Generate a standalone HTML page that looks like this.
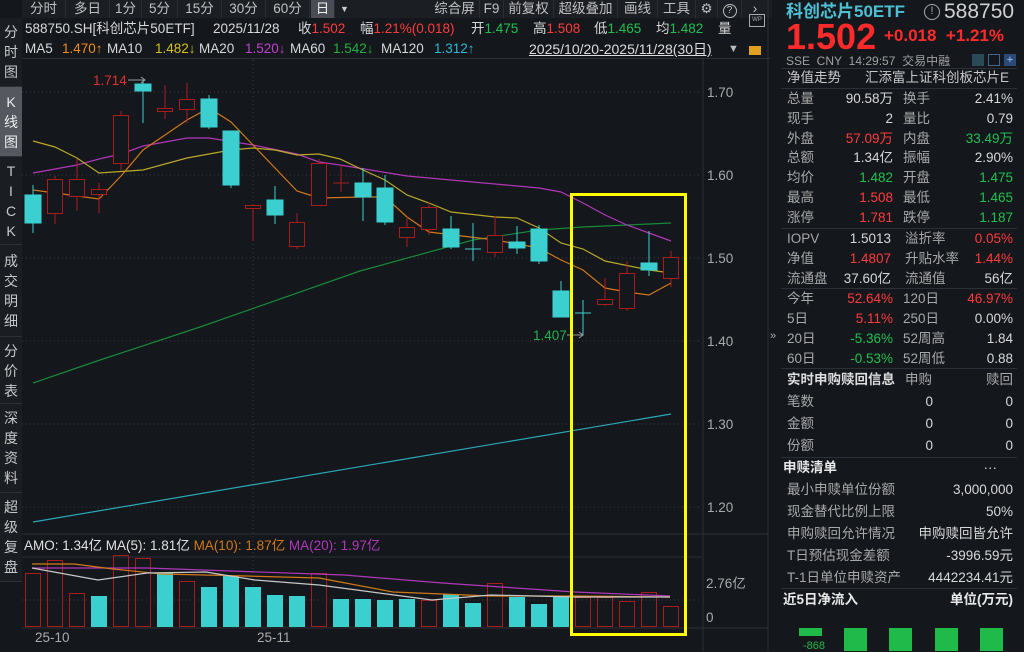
<!DOCTYPE html>
<html><head><meta charset="utf-8"><style>
*{margin:0;padding:0;box-sizing:border-box}
body{width:1024px;height:651px;background:#14171c;overflow:hidden;position:relative;font-family:"Liberation Sans","Noto Sans CJK SC",sans-serif;font-size:13px;color:#c8c8c8}
.a{position:absolute;white-space:nowrap}
.tb{position:absolute;top:0;height:18px;line-height:18px;font-size:13.5px;color:#c0c0c0;text-align:center;border-right:1px solid #2a2d33}
.sb{position:absolute;left:0;width:22px;text-align:center;font-size:14px;line-height:20px;color:#c8c8c8;border-bottom:1px solid #2c2f35;background:#1a1d22}
.r{color:#ff3b3b}.g{color:#1fc050}.w{color:#d8d8d8}.gy{color:#a8a8a8}
.i{position:absolute;white-space:nowrap;font-size:13.5px;line-height:18px}
.row{position:absolute;left:787px;width:226px;height:20px;font-size:13.5px;line-height:20px}
.row span{position:absolute}
.l1{left:0;color:#a8a8a8}.v1{right:120px;text-align:right}.l2{left:116px;color:#a8a8a8}.v2{right:0;text-align:right}
.sep{position:absolute;left:781px;width:236px;height:1px;background:#2c2f35}
</style></head><body>
<div class="a" style="left:22px;top:0;width:750px;height:18px;background:#1b1e23"></div>
<div class="tb" style="left:22px;width:44px">分时</div>
<div class="tb" style="left:66px;width:44px">多日</div>
<div class="tb" style="left:110px;width:32px">1分</div>
<div class="tb" style="left:142px;width:36px">5分</div>
<div class="tb" style="left:178px;width:44px">15分</div>
<div class="tb" style="left:222px;width:44px">30分</div>
<div class="tb" style="left:266px;width:44px">60分</div>
<div class="tb" style="left:311px;width:24px;background:#4a4d55;color:#eee">日</div>
<div class="a" style="left:340px;top:0;font-size:9px;line-height:18px;color:#ccc">▼</div>
<div class="tb" style="left:430px;width:50px">综合屏</div>
<div class="tb" style="left:480px;width:24px">F9</div>
<div class="tb" style="left:504px;width:50px">前复权</div>
<div class="tb" style="left:554px;width:64px">超级叠加</div>
<div class="tb" style="left:618px;width:40px">画线</div>
<div class="tb" style="left:658px;width:38px">工具</div>
<div class="tb" style="left:696px;width:22px">⚙</div>
<div class="tb" style="left:718px;width:24px"><span style="display:inline-block;width:14px;height:14px;border:1.3px solid #bbb;border-radius:50%;line-height:11px;font-size:10px;margin-top:2px">?</span></div>
<div class="tb" style="left:742px;width:26px;border:none">›</div>
<div class="sb" style="top:18px;height:69px;padding-top:4px">分<br>时<br>图</div>
<div class="sb" style="top:87px;height:70px;padding-top:5px;background:#55585f;color:#eee">K<br>线<br>图</div>
<div class="sb" style="top:157px;height:88px;padding-top:4px">T<br>I<br>C<br>K</div>
<div class="sb" style="top:245px;height:92px;padding-top:6px">成<br>交<br>明<br>细</div>
<div class="sb" style="top:337px;height:67px;padding-top:4px">分<br>价<br>表</div>
<div class="sb" style="top:404px;height:89px;padding-top:4px">深<br>度<br>资<br>料</div>
<div class="sb" style="top:493px;height:89px;padding-top:4px">超<br>级<br>复<br>盘</div>
<div class="i w" style="left:25px;top:20px">588750.SH[科创芯片50ETF]</div>
<div class="i w" style="left:213px;top:20px">2025/11/28</div>
<div class="i" style="left:298px;top:20px"><span class="w">收</span><span class="r">1.502</span></div>
<div class="i" style="left:360px;top:20px"><span class="w">幅</span><span class="r">1.21%(0.018)</span></div>
<div class="i" style="left:471px;top:20px"><span class="w">开</span><span class="g">1.475</span></div>
<div class="i" style="left:533px;top:20px"><span class="w">高</span><span class="r">1.508</span></div>
<div class="i" style="left:594px;top:20px"><span class="w">低</span><span class="g">1.465</span></div>
<div class="i" style="left:656px;top:20px"><span class="w">均</span><span class="g">1.482</span></div>
<div class="i w" style="left:718px;top:20px">量</div>
<div class="i w" style="left:25px;top:40px">MA5</div><div class="i" style="left:62px;top:40px;color:#f08c1e">1.470↑</div>
<div class="i w" style="left:107px;top:40px">MA10</div><div class="i" style="left:155px;top:40px;color:#d4c020">1.482↓</div>
<div class="i w" style="left:199px;top:40px">MA20</div><div class="i" style="left:245px;top:40px;color:#c040d0">1.520↓</div>
<div class="i w" style="left:290px;top:40px">MA60</div><div class="i" style="left:333px;top:40px;color:#20b040">1.542↓</div>
<div class="i w" style="left:381px;top:40px">MA120</div><div class="i" style="left:434px;top:40px;color:#30b8d8">1.312↑</div>
<div class="i" style="left:529px;top:40px;font-size:14px;text-decoration:underline;color:#ddd">2025/10/20-2025/11/28(30日)</div>
<div class="a" style="left:728px;top:43px;font-size:11px;color:#bbb">▼</div>
<div class="a" style="left:749px;top:46px;width:12px;height:9px;background:#e0a020"></div>
<div class="a" style="left:749px;top:14px;width:16px;height:13px;border:1px solid #aaa;font-size:6px;color:#aaa;line-height:11px;text-align:center">WP</div>
<div class="a" style="left:22px;top:58px;width:748px;height:1px;background:#2c2f35"></div>
<svg class="a" style="left:0;top:0" width="775" height="651">
<g stroke="#3a3d44" stroke-dasharray="1,3" stroke-width="1">
<line x1="22" y1="92" x2="702" y2="92"/><line x1="22" y1="175" x2="702" y2="175"/><line x1="22" y1="258" x2="702" y2="258"/><line x1="22" y1="341" x2="702" y2="341"/><line x1="22" y1="424" x2="702" y2="424"/><line x1="22" y1="507" x2="702" y2="507"/>
<line x1="253" y1="60" x2="253" y2="627"/><line x1="22" y1="600" x2="702" y2="600"/>
</g>
<line x1="703" y1="59" x2="703" y2="651" stroke="#2c2f35"/>
<line x1="768" y1="0" x2="768" y2="651" stroke="#2c2f35"/>
<line x1="22" y1="534" x2="768" y2="534" stroke="#2c2f35"/>
<line x1="22" y1="557" x2="702" y2="557" stroke="#2c2f35"/>
<line x1="22" y1="628" x2="768" y2="628" stroke="#2c2f35"/>
<g fill="#aaa" font-size="13.5" font-family="Liberation Sans">
<text x="707" y="97">1.70</text><text x="707" y="180">1.60</text><text x="707" y="263">1.50</text><text x="707" y="346">1.40</text><text x="707" y="429">1.30</text><text x="707" y="512">1.20</text>
<text x="706" y="588">2.76亿</text><text x="706" y="622">0</text>
<text x="35" y="642">25-10</text><text x="257" y="642">25-11</text>
</g>
<polyline fill="none" stroke="#178a3a" stroke-width="1.2" points="33,383 100,360 200,327 360,271 473,240 539,230 583,227 671,223"/>
<polyline fill="none" stroke="#2aa8b8" stroke-width="1.2" points="33,522 671,414"/>
<polyline fill="none" stroke="#b038b8" stroke-width="1.2" points="33,173 77,165 99,159 121,154 143,146 187,138 209,138 253,145 297,154 319,162 340,165 407,176 473,182 517,186 539,188 561,192 583,203 605,215 627,225 649,233 671,241"/>
<polyline fill="none" stroke="#b8a828" stroke-width="1.2" points="33,141 55,147 77,158 99,173 143,170 187,158 231,150 253,148 275,150 297,155 319,154 340,159 363,170 385,180 407,195 429,203 451,212 495,217 517,218 539,228 561,243 583,249 605,261 649,270 671,273"/>
<polyline fill="none" stroke="#d07818" stroke-width="1.2" points="33,190 99,199 121,176 143,150 187,120 209,108 231,122 253,145 297,191 319,198 363,197 385,197 407,217 429,232 495,240 539,248 561,260 583,270 605,288 627,292 649,295 671,283"/>
<g stroke-width="1">
<g stroke="#3ccfcf" fill="#3ccfcf">
<line x1="33" y1="185" x2="33" y2="233"/><rect x="25" y="195" width="16" height="28"/>
<line x1="143" y1="80" x2="143" y2="123"/><rect x="135" y="84" width="16" height="7"/>
<line x1="209" y1="95" x2="209" y2="129"/><rect x="201" y="99" width="16" height="28"/>
<line x1="231" y1="131" x2="231" y2="188"/><rect x="223" y="131" width="16" height="54"/>
<line x1="275" y1="186" x2="275" y2="224"/><rect x="267" y="200" width="16" height="15"/>
<line x1="363" y1="168" x2="363" y2="221"/><rect x="355" y="183" width="16" height="14"/>
<line x1="385" y1="175" x2="385" y2="225"/><rect x="377" y="188" width="16" height="34"/>
<line x1="451" y1="216" x2="451" y2="249"/><rect x="443" y="229" width="16" height="18"/>
<line x1="473" y1="223" x2="473" y2="261"/><line x1="465" y1="249" x2="481" y2="249"/>
<line x1="517" y1="226" x2="517" y2="254"/><rect x="509" y="242" width="16" height="6"/>
<line x1="539" y1="225" x2="539" y2="264"/><rect x="531" y="229" width="16" height="32"/>
<line x1="561" y1="281" x2="561" y2="317"/><rect x="553" y="291" width="16" height="26"/>
<line x1="583" y1="300" x2="583" y2="335"/><line x1="575" y1="313" x2="591" y2="313"/>
<line x1="649" y1="231" x2="649" y2="276"/><rect x="641" y="263" width="16" height="7"/>
</g>
<g stroke="#a81c1c" fill="#14171c">
<line x1="55" y1="176" x2="55" y2="224"/><rect x="47.5" y="179.5" width="15" height="34"/>
<line x1="77" y1="159" x2="77" y2="211"/><rect x="69.5" y="179.5" width="15" height="17"/>
<line x1="99" y1="183" x2="99" y2="213"/><rect x="91.5" y="189.5" width="15" height="5"/>
<line x1="121" y1="111" x2="121" y2="170"/><rect x="113.5" y="115.5" width="15" height="48"/>
<line x1="165" y1="85" x2="165" y2="119"/><rect x="157.5" y="108.5" width="15" height="3"/>
<line x1="187" y1="83" x2="187" y2="123"/><rect x="179.5" y="99.5" width="15" height="10"/>
<line x1="253" y1="204" x2="253" y2="241"/><rect x="245.5" y="205.5" width="15" height="3"/>
<line x1="297" y1="213" x2="297" y2="249"/><rect x="289.5" y="222.5" width="15" height="24"/>
<line x1="319" y1="159" x2="319" y2="205"/><rect x="311.5" y="163.5" width="15" height="42"/>
<line x1="341" y1="165" x2="341" y2="192"/><line x1="333" y1="183" x2="349" y2="183"/>
<line x1="407" y1="217" x2="407" y2="247"/><rect x="399.5" y="227.5" width="15" height="10"/>
<line x1="429" y1="202" x2="429" y2="235"/><rect x="421.5" y="207.5" width="15" height="22"/>
<line x1="495" y1="216" x2="495" y2="257"/><rect x="487.5" y="235.5" width="15" height="17"/>
<line x1="605" y1="278" x2="605" y2="306"/><rect x="597.5" y="299.5" width="15" height="5"/>
<line x1="627" y1="261" x2="627" y2="311"/><rect x="619.5" y="273.5" width="15" height="35"/>
<line x1="671" y1="251" x2="671" y2="287"/><rect x="663.5" y="257.5" width="15" height="21"/>
</g>
</g>
<text x="93" y="85" fill="#e03030" font-size="13.5" font-family="Liberation Sans">1.714</text>
<line x1="128" y1="80" x2="145" y2="80" stroke="#999"/><path d="M141,77 L145,80 L141,83" stroke="#999" fill="none"/>
<text x="533" y="340" fill="#20b050" font-size="13.5" font-family="Liberation Sans">1.407</text>
<line x1="567" y1="335" x2="583" y2="335" stroke="#999"/><path d="M579,332 L583,335 L579,338" stroke="#999" fill="none"/>
<g stroke="#a81c1c" fill="none">
<rect x="25.5" y="573.5" width="15" height="53"/><rect x="47.5" y="560.5" width="15" height="66"/><rect x="69.5" y="593.5" width="15" height="33"/>
<rect x="113.5" y="555.5" width="15" height="71"/><rect x="135.5" y="558.5" width="15" height="68"/><rect x="179.5" y="581.5" width="15" height="45"/>
<rect x="311.5" y="573.5" width="15" height="53"/><rect x="421.5" y="600.5" width="15" height="26"/><rect x="487.5" y="583.5" width="15" height="43"/>
<rect x="575.5" y="597.5" width="15" height="29"/><rect x="597.5" y="597.5" width="15" height="29"/><rect x="619.5" y="601.5" width="15" height="25"/><rect x="641.5" y="592.5" width="15" height="34"/><rect x="663.5" y="606.5" width="15" height="20"/>
</g>
<g fill="#3ccfcf">
<rect x="91" y="596" width="16" height="31"/><rect x="157" y="573" width="16" height="54"/><rect x="201" y="587" width="16" height="40"/><rect x="223" y="576" width="16" height="51"/><rect x="245" y="587" width="16" height="40"/><rect x="267" y="595" width="16" height="32"/><rect x="289" y="596" width="16" height="31"/>
<rect x="333" y="599" width="16" height="28"/><rect x="355" y="599" width="16" height="28"/><rect x="377" y="600" width="16" height="27"/><rect x="399" y="599" width="16" height="28"/><rect x="443" y="594" width="16" height="33"/><rect x="465" y="603" width="16" height="24"/>
<rect x="509" y="597" width="16" height="30"/><rect x="531" y="604" width="16" height="23"/><rect x="553" y="597" width="16" height="30"/>
</g>
<polyline fill="none" stroke="#b038b8" stroke-width="1.2" points="32,568 147,568 344,575 442,583 575,592 670,596"/>
<polyline fill="none" stroke="#d07818" stroke-width="1.2" points="32,564 74,564 113,569 162,574 246,576 319,578 393,592 491,596 575,596 670,597"/>
<polyline fill="none" stroke="#c8c8c8" stroke-width="1.2" points="32,568 98,580 147,573 206,572 255,580 319,585 432,600 491,595 575,597 670,597"/>
<text x="24" y="550" fill="#e0e0e0" font-size="13.5" font-family="Liberation Sans,Noto Sans CJK SC">AMO: 1.34亿 MA(5): 1.81亿 <tspan fill="#d07818">MA(10): 1.87亿</tspan> <tspan fill="#b038b8">MA(20): 1.97亿</tspan></text>
<rect x="571.5" y="194.5" width="114" height="440" fill="none" stroke="#ffff00" stroke-width="3"/>
</svg>
<div class="a" style="left:770px;top:330px;font-size:11px;color:#aaa">»</div>
<div class="a" style="left:786px;top:2px;font-size:17px;line-height:20px;font-weight:bold;color:#4ec0d4">科创芯片50ETF</div>
<div class="a" style="left:924px;top:4px;width:16px;height:16px;border:1.5px solid #aaa;border-radius:50%;font-size:11px;text-align:center;line-height:13px;color:#aaa">!</div>
<div class="a" style="left:944px;top:0px;font-size:21px;line-height:24px;color:#d0d0d0">588750</div>
<div class="a" style="left:786px;top:18px;font-size:36px;font-weight:bold;color:#ff2a2a;line-height:38px">1.502</div>
<div class="a" style="left:884px;top:26px;font-size:17px;font-weight:bold;color:#ff2a2a">+0.018&nbsp;&nbsp;+1.21%</div>
<div class="a" style="left:786px;top:52px;font-size:12px;color:#a0a0a0">SSE&nbsp; CNY&nbsp; 14:29:57&nbsp; 交易中融</div>
<div class="a" style="left:972px;top:54px;width:12px;height:12px;background:#2a4a55"></div>
<div class="a" style="left:988px;top:54px;width:12px;height:12px;border:1px solid #3a6a90"></div>
<div class="a" style="left:1004px;top:54px;width:12px;height:12px;background:#2a4a75;color:#9cf;font-size:11px;line-height:12px;text-align:center">+</div>
<div class="sep" style="top:68px"></div>
<div class="row" style="top:68px"><span class="l1" style="color:#c8c8c8">净值走势</span><span style="left:78px;color:#c8c8c8">汇添富上证科创板芯片E</span></div>
<div class="sep" style="top:88px"></div>
<div class="row" style="top:89px"><span class="l1">总量</span><span class="v1 w">90.58万</span><span class="l2">换手</span><span class="v2 w">2.41%</span></div>
<div class="row" style="top:109px"><span class="l1">现手</span><span class="v1 w">2</span><span class="l2">量比</span><span class="v2 w">0.79</span></div>
<div class="row" style="top:129px"><span class="l1">外盘</span><span class="v1 r">57.09万</span><span class="l2">内盘</span><span class="v2 g">33.49万</span></div>
<div class="row" style="top:148px"><span class="l1">总额</span><span class="v1 w">1.34亿</span><span class="l2">振幅</span><span class="v2 w">2.90%</span></div>
<div class="row" style="top:168px"><span class="l1">均价</span><span class="v1 g">1.482</span><span class="l2">开盘</span><span class="v2 g">1.475</span></div>
<div class="row" style="top:188px"><span class="l1">最高</span><span class="v1 r">1.508</span><span class="l2">最低</span><span class="v2 g">1.465</span></div>
<div class="row" style="top:208px"><span class="l1">涨停</span><span class="v1 r">1.781</span><span class="l2">跌停</span><span class="v2 g">1.187</span></div>
<div class="sep" style="top:228px"></div>
<div class="row" style="top:229px"><span class="l1">IOPV</span><span class="v1 w" style="right:122px">1.5013</span><span class="l2" style="left:118px">溢折率</span><span class="v2 r">0.05%</span></div>
<div class="row" style="top:249px"><span class="l1">净值</span><span class="v1 r" style="right:122px">1.4807</span><span class="l2" style="left:118px">升贴水率</span><span class="v2 r">1.44%</span></div>
<div class="row" style="top:269px"><span class="l1">流通盘</span><span class="v1 w" style="right:122px">37.60亿</span><span class="l2" style="left:118px">流通值</span><span class="v2 w">56亿</span></div>
<div class="sep" style="top:288px"></div>
<div class="row" style="top:289px"><span class="l1">今年</span><span class="v1 r">52.64%</span><span class="l2">120日</span><span class="v2 r">46.97%</span></div>
<div class="row" style="top:309px"><span class="l1">5日</span><span class="v1 r">5.11%</span><span class="l2">250日</span><span class="v2 w">0.00%</span></div>
<div class="row" style="top:329px"><span class="l1">20日</span><span class="v1 g">-5.36%</span><span class="l2">52周高</span><span class="v2 w">1.84</span></div>
<div class="row" style="top:349px"><span class="l1">60日</span><span class="v1 g">-0.53%</span><span class="l2">52周低</span><span class="v2 w">0.88</span></div>
<div class="sep" style="top:368px"></div>
<div class="row" style="top:370px"><span class="l1" style="color:#ddd;font-weight:bold">实时申购赎回信息</span><span style="left:118px;color:#a8a8a8">申购</span><span class="v2 gy">赎回</span></div>
<div class="row" style="top:392px"><span class="l1">笔数</span><span class="v1 w" style="right:80px">0</span><span class="v2 w">0</span></div>
<div class="row" style="top:414px"><span class="l1">金额</span><span class="v1 w" style="right:80px">0</span><span class="v2 w">0</span></div>
<div class="row" style="top:436px"><span class="l1">份额</span><span class="v1 w" style="right:80px">0</span><span class="v2 w">0</span></div>
<div class="sep" style="top:457px"></div>
<div class="row" style="top:458px;left:783px"><span style="left:0;color:#e8e8e8;font-weight:bold">申赎清单</span><span style="right:12px;color:#ccc">···</span></div>
<div class="row" style="top:480px"><span class="l1">最小申赎单位份额</span><span class="v2 w">3,000,000</span></div>
<div class="row" style="top:502px"><span class="l1">现金替代比例上限</span><span class="v2 w">50%</span></div>
<div class="row" style="top:524px"><span class="l1">申购赎回允许情况</span><span class="v2 w">申购赎回皆允许</span></div>
<div class="row" style="top:546px"><span class="l1">T日预估现金差额</span><span class="v2 w">-3996.59元</span></div>
<div class="row" style="top:568px"><span class="l1">T-1日单位申赎资产</span><span class="v2 w">4442234.41元</span></div>
<div class="sep" style="top:588px"></div>
<div class="row" style="top:590px;left:783px;width:230px"><span style="left:0;color:#e8e8e8;font-weight:bold">近5日净流入</span><span style="right:0;color:#e8e8e8;font-weight:bold">单位(万元)</span></div>
<div class="a" style="left:799px;top:628px;width:23px;height:8px;background:#1fba4a"></div>
<div class="a" style="left:803px;top:640px;font-size:11px;color:#1fba4a">-868</div>
<div class="a" style="left:844px;top:628px;width:23px;height:23px;background:#1fba4a"></div>
<div class="a" style="left:889px;top:628px;width:23px;height:23px;background:#1fba4a"></div>
<div class="a" style="left:935px;top:628px;width:23px;height:23px;background:#1fba4a"></div>
<div class="a" style="left:980px;top:628px;width:23px;height:23px;background:#1fba4a"></div>
</body></html>
